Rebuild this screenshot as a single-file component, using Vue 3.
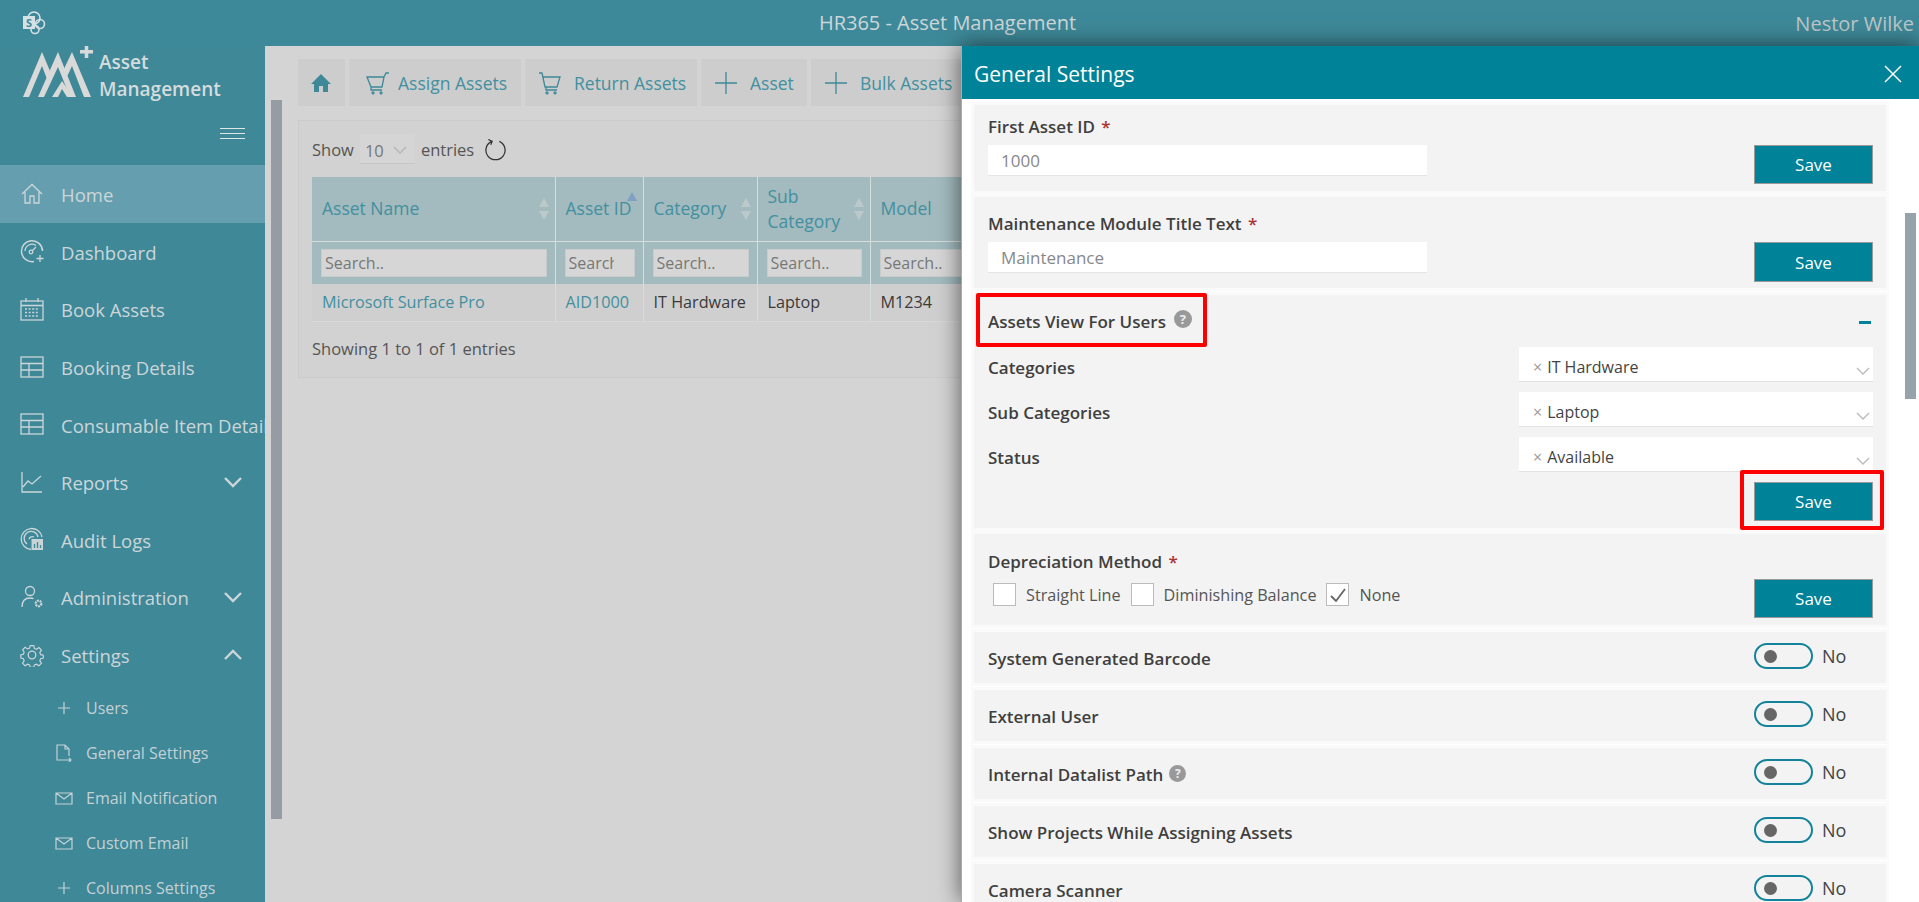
<script setup>
const navItems = [
  { label: 'Home', icon: 'home', active: true },
  { label: 'Dashboard', icon: 'gauge' },
  { label: 'Book Assets', icon: 'calendar' },
  { label: 'Booking Details', icon: 'table' },
  { label: 'Consumable Item Details', icon: 'table' },
  { label: 'Reports', icon: 'chart', arrow: 'down' },
  { label: 'Audit Logs', icon: 'audit' },
  { label: 'Administration', icon: 'admin', arrow: 'down' },
  { label: 'Settings', icon: 'gear', arrow: 'up' },
];

const subItems = [
  { label: 'Users', icon: 'plus' },
  { label: 'General Settings', icon: 'file' },
  { label: 'Email Notification', icon: 'mail' },
  { label: 'Custom Email', icon: 'mail' },
  { label: 'Columns Settings', icon: 'plus' },
];

const columns = [
  { label: 'Asset Name', width: 243 },
  { label: 'Asset ID', width: 88, sorted: true },
  { label: 'Category', width: 114 },
  { label: 'Sub Category', width: 113 },
  { label: 'Model', width: 110 },
];

const cells = ['Microsoft Surface Pro', 'AID1000', 'IT Hardware', 'Laptop', 'M1234'];

const filters = [
  { label: 'Categories', value: 'IT Hardware' },
  { label: 'Sub Categories', value: 'Laptop' },
  { label: 'Status', value: 'Available' },
];

const methods = [
  { label: 'Straight Line' },
  { label: 'Diminishing Balance' },
  { label: 'None', checked: true },
];

const toggles = [
  { label: 'System Generated Barcode' },
  { label: 'External User' },
  { label: 'Internal Datalist Path', help: true },
  { label: 'Show Projects While Assigning Assets' },
  { label: 'Camera Scanner' },
];
</script>

<template>
  <div class="app">
    <header class="topbar">
      <svg class="sp-logo" viewBox="0 0 24 24" width="24" height="24">
        <circle cx="12" cy="7" r="6" fill="none" stroke="#d5e2e5" stroke-width="1.6" />
        <circle cx="18" cy="13" r="4.5" fill="none" stroke="#d5e2e5" stroke-width="1.6" />
        <circle cx="13" cy="18.5" r="4" fill="none" stroke="#d5e2e5" stroke-width="1.6" />
        <rect x="1" y="5" width="12" height="13" fill="#d5e2e5" />
        <text x="7" y="15.5" text-anchor="middle" class="sp-letter">S</text>
      </svg>
      <div class="top-title">HR365 - Asset Management</div>
      <div class="top-user">Nestor Wilke</div>
    </header>

    <div class="layout">
      <aside class="sidebar">
        <div class="brand">
          <svg class="brand-mark" viewBox="0 0 72 50" width="72" height="50">
            <g fill="#d9d9d9">
              <polygon points="0,47 19,2 27,21 24,29 19,16 6,47" />
              <polygon points="15,47 35,2 53,47 47,47 35,17 21,47" />
              <polygon points="40,21 49,2 68,47 61,47 49,16 43,29" />
              <polygon points="29,47 39,31 50,47 44,47 39,39 35,47" />
              <rect x="57" y="0" width="13" height="3.500" />
              <rect x="61.750" y="-5" width="3.500" height="13" />
            </g>
          </svg>
          <div class="brand-text">Asset<br />Management</div>
        </div>
        <div class="burger"><span></span><span></span><span></span></div>

        <nav>
          <div v-for="item in navItems" :key="item.label" class="nav-item" :class="{ active: item.active }">
            <svg class="nav-icon" viewBox="0 0 24 24" width="24" height="24" fill="none" stroke="currentColor" stroke-width="1.3">
              <template v-if="item.icon === 'home'">
                <path d="M2 12 12 2.5 22 12M5 10v11h5v-7h4v7h5V10" />
              </template>
              <template v-else-if="item.icon === 'gauge'">
                <path d="M14 22.5A10.5 10.5 0 1 1 22.5 12" stroke-width="1.5" />
                <path d="M5 12a7 7 0 0 1 11-5.5" />
                <circle cx="11" cy="13" r="1.8" />
                <path d="M12 12l4-4M20 16v7M16.500 19.500h7" />
              </template>
              <template v-else-if="item.icon === 'calendar'">
                <rect x="1" y="4" width="22" height="19" />
                <path d="M1 8.500h22M6 1v4M18 1v4" />
                <path d="M5 12h14M5 15.500h14M5 19h14" stroke-dasharray="2 1.600" stroke-width="1.600" />
              </template>
              <template v-else-if="item.icon === 'table'">
                <rect x="1" y="2" width="22" height="20" />
                <path d="M1 8.500h22M1 15h22M9 8.500V22" />
              </template>
              <template v-else-if="item.icon === 'chart'">
                <path d="M2 2v20h20M3 17l5-6 4 3 9-8" />
              </template>
              <template v-else-if="item.icon === 'audit'">
                <path d="M11 22.500A10.500 10.500 0 1 1 22 10" />
                <path d="M7 17a7 7 0 1 1 11-7" />
                <path d="M9 12a3.500 3.500 0 0 1 5-2" />
                <rect x="11.500" y="12" width="11.500" height="11" fill="#c8d4d6" stroke="none" />
                <path d="M14.500 21v-4M17.500 21v-6M20.500 21v-3" stroke="#3e8898" />
              </template>
              <template v-else-if="item.icon === 'admin'">
                <circle cx="10" cy="6" r="4.500" />
                <path d="M2 22c0-6 3-9 8-9 1.500 0 2.500.2 3.500.7" />
                <circle cx="18.500" cy="18.500" r="2.800" stroke-width="2.200" stroke-dasharray="2 .8" />
              </template>
              <template v-else-if="item.icon === 'gear'">
                <circle cx="12" cy="12" r="3.800" />
                <path d="M10 1.500h4l.7 3.200 2.200.9 2.800-1.800 2.800 2.800-1.800 2.800.9 2.200 3 .6v-.2 3.500l-3 .7-.9 2.200 1.800 2.800-2.800 2.800-2.800-1.800-2.200.9-.7 2.600h-4l-.7-2.600-2.200-.9-2.800 1.800-2.800-2.800 1.800-2.800-.9-2.200-2.800-.7v-3.700l2.800-.6.900-2.200-1.800-2.800 2.800-2.800 2.800 1.800 2.200-.9z" transform="translate(1.200 1.200) scale(.9)" />
              </template>
            </svg>
            <span class="nav-label">{{ item.label }}</span>
            <svg v-if="item.arrow" class="nav-arrow" viewBox="0 0 20 12" width="20" height="12" fill="none" stroke="currentColor" stroke-width="2.400">
              <path :d="item.arrow === 'down' ? 'M2 2l8 8 8-8' : 'M2 10l8-8 8 8'" />
            </svg>
          </div>
        </nav>

        <div class="subnav">
          <div v-for="sub in subItems" :key="sub.label" class="sub-item">
            <svg class="sub-icon" viewBox="0 0 18 18" width="18" height="18" fill="none" stroke="currentColor" stroke-width="1.200">
              <path v-if="sub.icon === 'plus'" d="M3 9h12M9 3v12" />
              <path v-else-if="sub.icon === 'file'" d="M13 16H2V1h8l4 4v7M10 1v4h4M9 16h7M14 14l2 2-2 2" />
              <path v-else d="M1 4h16v11H1zM1 4l8 6 8-6" />
            </svg>
            <span>{{ sub.label }}</span>
          </div>
        </div>
      </aside>

      <main class="main">
        <div class="page-thumb"></div>
        <div class="toolbar">
          <button class="tool tool-home">
            <svg viewBox="0 0 20 20" width="20" height="20" fill="#3e8898"><path d="M10 1 0 11h3v8h5v-6h4v6h5v-8h3z" /></svg>
          </button>
          <button class="tool tool-assign">
            <svg viewBox="0 0 24 24" width="24" height="24" fill="none" stroke="#3e8898" stroke-width="1.300"><path d="M1 6h17l-2 10H5zM18 6l2-4h3M5 16v3h11M7 21a1 1 0 1 0 .1 0M15 21a1 1 0 1 0 .1 0" /></svg>
            Assign Assets
          </button>
          <button class="tool tool-return">
            <svg viewBox="0 0 24 24" width="24" height="24" fill="none" stroke="#3e8898" stroke-width="1.300"><path d="M1 2h3l3 14h12l3-10H5M8 16v3h11M9 21a1 1 0 1 0 .1 0M17 21a1 1 0 1 0 .1 0" /></svg>
            Return Assets
          </button>
          <button class="tool tool-asset">
            <svg viewBox="0 0 24 24" width="24" height="24" fill="none" stroke="#3e8898" stroke-width="1.300"><path d="M1 12h22M12 1v22" /></svg>
            Asset
          </button>
          <button class="tool tool-bulk">
            <svg viewBox="0 0 24 24" width="24" height="24" fill="none" stroke="#3e8898" stroke-width="1.300"><path d="M1 12h22M12 1v22" /></svg>
            Bulk Assets
          </button>
        </div>

        <section class="list-panel">
          <div class="length-row">
            <span>Show</span>
            <div class="length-select">
              <span>10</span>
              <svg viewBox="0 0 14 8" width="14" height="8" fill="none" stroke="#b4b4b4" stroke-width="1.300"><path d="M1 1l6 6 6-6" /></svg>
            </div>
            <span>entries</span>
            <svg class="refresh" viewBox="0 0 24 24" width="23" height="23" fill="none" stroke="#333" stroke-width="1.300"><path d="M8 3.500A10 10 0 1 0 16 3.500M4.500 1.500 8.500 3.500 7 7" /></svg>
          </div>

          <table class="grid">
            <thead>
              <tr class="head-row">
                <th v-for="col in columns" :key="col.label" :style="{ width: col.width + 'px' }">
                  <div class="th-inner">
                    <span class="th-label">{{ col.label }}</span>
                    <svg class="sort" viewBox="0 0 10 24" width="10" height="24">
                      <path d="M5 1 10 10H0z" :fill="col.sorted ? '#7f9fc4' : '#bcc9cb'" />
                      <path d="M5 23 0 14h10z" :fill="col.sorted ? 'none' : '#bcc9cb'" />
                    </svg>
                  </div>
                </th>
              </tr>
              <tr class="search-row">
                <th v-for="col in columns" :key="col.label"><input placeholder="Search.." /></th>
              </tr>
            </thead>
            <tbody>
              <tr>
                <td v-for="(cell, i) in cells" :key="cell" :class="{ link: i < 2 }">{{ cell }}</td>
              </tr>
            </tbody>
          </table>

          <div class="info">Showing 1 to 1 of 1 entries</div>
        </section>
      </main>
    </div>

    <aside class="drawer">
      <div class="drawer-head">
        <span>General Settings</span>
        <svg viewBox="0 0 18 18" width="18" height="18" fill="none" stroke="#fff" stroke-width="1.500"><path d="M1 1l16 16M17 1 1 17" /></svg>
      </div>

      <div class="drawer-body">
        <div class="card field-card card-first">
          <div class="field">
            <label>First Asset ID <em>*</em></label>
            <input placeholder="1000" />
          </div>
          <button class="save">Save</button>
        </div>

        <div class="card field-card card-second">
          <div class="field">
            <label>Maintenance Module Title Text <em>*</em></label>
            <input placeholder="Maintenance" />
          </div>
          <button class="save">Save</button>
        </div>

        <div class="card view-card">
          <div class="view-head">
            <div class="outline outline-title">
              <label>Assets View For Users</label>
              <span class="help">?</span>
            </div>
            <span class="minus"></span>
          </div>
          <div v-for="f in filters" :key="f.label" class="filter-row">
            <label>{{ f.label }}</label>
            <div class="multi">
              <span class="multi-x">×</span>
              <span>{{ f.value }}</span>
              <svg viewBox="0 0 14 8" width="14" height="8" fill="none" stroke="#b9b9b9" stroke-width="1.300"><path d="M1 1l6 6 6-6" /></svg>
            </div>
          </div>
          <div class="view-foot">
            <div class="outline outline-save"><button class="save">Save</button></div>
          </div>
        </div>

        <div class="card field-card card-dep">
          <div class="field">
            <label>Depreciation Method <em>*</em></label>
            <div class="methods">
              <div v-for="m in methods" :key="m.label" class="method">
                <span class="box">
                  <svg v-if="m.checked" viewBox="0 0 16 14" width="16" height="14" fill="none" stroke="#666" stroke-width="1.800"><path d="M1 8l5 5 9-12" /></svg>
                </span>
                <span>{{ m.label }}</span>
              </div>
            </div>
          </div>
          <button class="save">Save</button>
        </div>

        <div v-for="t in toggles" :key="t.label" class="card toggle-card">
          <label>{{ t.label }}<span v-if="t.help" class="help help-small">?</span></label>
          <div class="toggle-wrap">
            <span class="toggle"><i></i></span>
            <span class="toggle-text">No</span>
          </div>
        </div>
      </div>

      <div class="scroll-thumb"></div>
    </aside>
  </div>
</template>

<style>
html, body { margin: 0; overflow: hidden; }
</style>

<style scoped>
.app {
  position: relative;
  width: 1919px;
  height: 902px;
  overflow: hidden;
  font-family: "Open Sans", "Noto Sans", sans-serif;
  background: #d4d4d4;
}

/* top bar */
.topbar {
  height: 46px;
  background: #3e8999;
  display: grid;
  grid-template-columns: 1fr auto 1fr;
  align-items: center;
  color: #cdd7d9;
  position: relative;
}
.sp-logo { margin-left: 22px; }
.sp-letter { font: 700 11px "Open Sans", sans-serif; fill: #3e8898; }
.top-title { font-size: 20px; transform: translateX(-12px); margin-top: -1px; }
.top-user {
  justify-self: end;
  padding-right: 5px;
  font-size: 20px;
  color: #bcc7c8;
}

.layout {
  display: flex;
  height: 856px;
}

/* sidebar */
.sidebar {
  width: 265px;
  flex: none;
  background: #3e8898;
  color: #ccd6d8;
  overflow: hidden;
}
.brand {
  display: flex;
  padding: 2px 0 0 23px;
  height: 72px;
  box-sizing: border-box;
}
.brand-mark { flex: none; margin-top: 2px; overflow: visible; }
.brand-text {
  margin: 1px 0 0 4px;
  font-size: 19px;
  line-height: 27px;
  font-weight: 600;
  color: #d5dcdd;
}
.burger {
  display: flex;
  flex-direction: column;
  gap: 4px;
  align-items: flex-end;
  padding: 10px 20px 0 0;
  height: 47px;
  box-sizing: border-box;
}
.burger span {
  width: 25px;
  height: 1px;
  background: #dfe6e7;
}
.nav-item {
  height: 57.600px;
  display: flex;
  align-items: center;
  padding-left: 20px;
  font-size: 18.500px;
  white-space: nowrap;
  position: relative;
}
.nav-item.active { background: #659faf; }
.nav-icon { flex: none; margin-right: 17px; }
.nav-label { margin-top: 2px; }
.nav-arrow { position: absolute; left: 223px; top: 23px; }
.subnav { margin-top: 2px; }
.sub-item {
  height: 45px;
  display: flex;
  align-items: center;
  padding-left: 55px;
  font-size: 16px;
  color: #c4d1d4;
}
.sub-icon { flex: none; margin-right: 13px; }

/* main */
.main {
  flex: 1;
  min-width: 0;
  padding: 13px 0 0 33px;
  overflow: hidden;
  position: relative;
}
.page-thumb {
  position: absolute;
  left: 6px;
  top: 54px;
  width: 11px;
  height: 719px;
  background: #969ca3;
}
.toolbar {
  display: flex;
  gap: 4px;
  height: 47px;
}
.tool {
  display: flex;
  align-items: center;
  gap: 12px;
  border: 0;
  padding: 0 0 0 13px;
  background: #cdcdcd;
  color: #42909f;
  font: 17.500px "Open Sans", sans-serif;
  white-space: nowrap;
}
.tool-home { width: 47px; }
.tool-assign { width: 172px; padding-left: 17px; gap: 8px; }
.tool-return { width: 172px; }
.tool-asset { width: 106px; }
.tool-bulk { width: 150px; }
.list-panel {
  margin-top: 14px;
  height: 258px;
  width: 1000px;
  box-sizing: border-box;
  background: #d2d2d2;
  border: 1px solid #cbcbcb;
  padding: 0 0 0 13px;
  font-size: 16.500px;
  color: #555;
}
.length-row {
  display: flex;
  align-items: center;
  height: 56px;
  gap: 6px;
}
.length-select {
  width: 55px;
  height: 30px;
  box-sizing: border-box;
  background: #d5d5d5;
  border-bottom: 1px solid #c6c6c6;
  display: flex;
  align-items: center;
  justify-content: space-between;
  padding: 3px 8px 0 5px;
  color: #777;
}
.refresh { margin-left: 4px; }
.grid {
  table-layout: fixed;
  border-collapse: collapse;
  width: 668px;
  font-size: 16.200px;
}
.grid th, .grid td {
  border-right: 1px solid #d8dede;
  padding: 0;
  box-sizing: border-box;
}
.head-row th {
  height: 64px;
  background: #a3bbbf;
  border-bottom: 1px solid #d8dede;
  color: #42909f;
  font-weight: 400;
  font-size: 17.500px;
  text-align: left;
}
.th-inner {
  display: flex;
  align-items: center;
  justify-content: space-between;
  padding: 0 6px 0 10px;
}
.th-label { line-height: 25px; width: min-content; min-width: 0; }
.head-row th:first-child .th-label { width: auto; }
.head-row th:nth-child(2) .th-label { width: auto; white-space: nowrap; }
.head-row th:nth-child(2) .sort { margin-left: -8px; margin-top: -12px; }
.search-row th {
  height: 43px;
  background: #a3bbbf;
  padding: 0 8px 0 9px;
}
.search-row input {
  display: block;
  width: 100%;
  height: 28px;
  box-sizing: border-box;
  border: 1px solid #c8cccc;
  background: #d6d6d6;
  padding: 0 20px 0 3px;
  font: 16px "Open Sans", sans-serif;
}
.search-row input::placeholder { color: #777; opacity: 1; }
.grid td {
  height: 37px;
  background: #cfcfcf;
  padding-left: 10px;
  color: #3a3a3a;
  border-bottom: 1px solid #d8d8d8;
  white-space: nowrap;
}
.grid td.link { color: #42909f; }
.info { margin-top: 15px; }

/* settings drawer */
.drawer {
  position: absolute;
  left: 961px;
  top: 46px;
  width: 958px;
  height: 856px;
  background: #fff;
  box-shadow: 0 0 22px rgba(0, 0, 0, .6);
  border-left: 1px solid #aaa;
  box-sizing: border-box;
  overflow: hidden;
}
.drawer-head {
  height: 53px;
  box-sizing: border-box;
  padding: 2px 17px 0 12px;
  background: #008299;
  color: #fff;
  display: flex;
  align-items: center;
  justify-content: space-between;
  font-size: 21px;
}
.drawer-body {
  display: flex;
  flex-direction: column;
  gap: 6px;
  padding: 6px 0 0 12px;
  width: 912px;
  background: #fff;
}
.card {
  width: 912px;
  box-sizing: border-box;
  background: #f3f3f3;
  padding: 0 13px 0 14px;
  flex: none;
  box-shadow: 0 0 0 3px #fafafa;
}
.card label {
  display: block;
  line-height: 24px;
  font-size: 17px;
  font-weight: 600;
  color: #3f3f3f;
  white-space: nowrap;
}
.card em {
  font-style: normal;
  color: #a33;
  margin-left: 2px;
}
.field-card {
  display: flex;
  justify-content: space-between;
  align-items: flex-end;
}
.field { width: 439px; align-self: flex-start; }
.field input {
  display: block;
  width: 100%;
  height: 31px;
  margin-top: 6px;
  box-sizing: border-box;
  border: 0;
  border-bottom: 1px solid #e5e5e5;
  background: #fff;
  padding: 0 13px;
  font: 17px "Open Sans", sans-serif;
}
.field input::placeholder { color: #888; opacity: 1; }
.save {
  width: 119px;
  height: 39px;
  flex: none;
  box-sizing: border-box;
  background: #008299;
  border: 1px solid #999;
  color: #fff;
  font: 17px "Open Sans", sans-serif;
}
.card-first { height: 86px; padding-top: 10px; padding-bottom: 7px; }
.card-second { height: 91px; padding-top: 15px; padding-bottom: 6px; margin-bottom: 1px; }
.card-second .save { height: 40px; }
.view-card { height: 233px; }
.view-head {
  height: 52px;
  position: relative;
}
.outline { position: absolute; border: 4px solid #f00; border-radius: 2px; box-sizing: border-box; }
.outline-title {
  left: -12px;
  top: -2px;
  width: 231px;
  height: 54px;
  display: flex;
  align-items: center;
  gap: 8px;
  padding: 4px 0 0 8px;
}
.help {
  display: inline-flex;
  align-items: center;
  justify-content: center;
  width: 18px;
  height: 18px;
  border-radius: 50%;
  background: #999;
  color: #eee;
  font-size: 13px;
  font-weight: 700;
  margin-top: -6px;
}
.minus {
  position: absolute;
  left: 871px;
  top: 26px;
  width: 12px;
  height: 3px;
  background: #008299;
}
.filter-row {
  height: 45px;
  display: flex;
  align-items: flex-start;
  justify-content: space-between;
}
.filter-row label { margin-top: 9px; }
.multi {
  width: 354px;
  height: 35px;
  box-sizing: border-box;
  background: #fff;
  border-bottom: 1px solid #e3e3e3;
  display: flex;
  align-items: center;
  padding: 5px 0 0 14px;
  font-size: 16px;
  color: #444;
  position: relative;
}
.multi-x { color: #999; margin-right: 5px; font-size: 16px; }
.multi svg { position: absolute; right: 3px; top: 20px; }
.view-foot { position: relative; }
.outline-save {
  left: 752px;
  top: -12px;
  width: 144px;
  height: 60px;
  padding: 8px 0 0 10px;
}
.card-dep { height: 91px; padding-top: 16px; padding-bottom: 7px; margin-bottom: 1px; }
.methods {
  display: flex;
  gap: 10px;
  margin-top: 9px;
  padding-left: 5px;
}
.method {
  display: flex;
  align-items: center;
  gap: 10px;
  font-size: 16.200px;
  color: #555;
  white-space: nowrap;
}
.box {
  width: 23px;
  height: 23px;
  box-sizing: border-box;
  border: 1px solid #bbb;
  background: #fff;
  display: flex;
  align-items: center;
  justify-content: center;
}
.toggle-card {
  height: 51px;
  margin-bottom: 1px;
  display: flex;
  align-items: center;
  justify-content: space-between;
}
.toggle-card label { margin-top: 2px; }
.help-small { margin-left: 6px; width: 17px; height: 17px; font-size: 12px; vertical-align: 3px; }
.toggle-wrap {
  display: flex;
  align-items: center;
  gap: 9px;
  width: 119px;
  margin-top: -3px;
}
.toggle {
  width: 59px;
  height: 26px;
  box-sizing: border-box;
  border: 2px solid #12839a;
  border-radius: 13px;
  display: flex;
  align-items: center;
  padding-left: 8px;
}
.toggle i {
  width: 13px;
  height: 13px;
  border-radius: 50%;
  background: #666;
}
.toggle-text { font-size: 18px; color: #444; }
.scroll-thumb {
  position: absolute;
  left: 943px;
  top: 167px;
  width: 11px;
  height: 186px;
  background: #97a3ab;
}
</style>
